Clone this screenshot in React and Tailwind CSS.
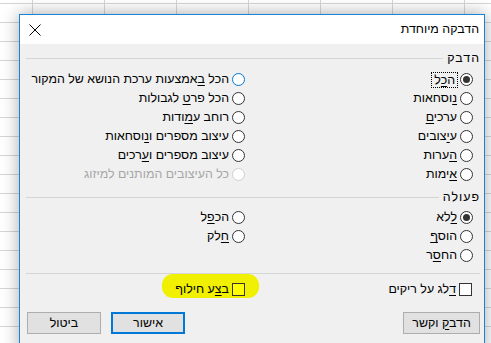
import React from "react";

function U({ children }) {
  return <span className="underline underline-offset-[2px]">{children}</span>;
}

function Radio({ children, checked, focus, blue, disabled }) {
  const ring = blue
    ? "border-[#0078d7]"
    : disabled
    ? "border-[#cfcfcf]"
    : "border-[#333333]";
  return (
    <div className="flex items-center h-[19px] gap-[2px]">
      <span
        className={`w-[13px] h-[13px] rounded-full border bg-white flex items-center justify-center shrink-0 ${ring}`}
      >
        {checked && <span className="w-[7px] h-[7px] rounded-full bg-[#333333]" />}
      </span>
      <span
        className={`${focus ? "border border-dotted border-black h-[16px] px-[2px] leading-[14px]" : "px-[1px]"} ${
          disabled ? "text-[#a6a6a6]" : "text-black"
        }`}
      >
        {children}
      </span>
    </div>
  );
}

function Check({ children, yellow }) {
  return (
    <div className="flex items-center h-[19px] gap-[3px]">
      <span
        className={`w-[13px] h-[13px] border border-[#333333] shrink-0 ${
          yellow ? "bg-[#ffff00]" : "bg-white"
        }`}
      />
      <span className="text-black">{children}</span>
    </div>
  );
}

function Header({ children }) {
  return (
    <div className="flex items-center h-[16px] gap-[4px]">
      <span className="tracking-[1px]">{children}</span>
      <div className="flex-1 h-px bg-[#d5d5d5]" />
    </div>
  );
}

function Btn({ children, primary, w }) {
  return (
    <div
      className={`h-[22px] flex items-center justify-center bg-[#e1e1e1] ${
        primary ? "border-2 border-[#0078d7]" : "border border-[#adadad]"
      } ${w}`}
    >
      <span>{children}</span>
    </div>
  );
}

export default function App() {
  return (
    <div className="relative w-[491px] h-[343px] overflow-hidden bg-white bg-[linear-gradient(to_right,#d6d6d6_1px,transparent_1px),linear-gradient(to_bottom,#d6d6d6_1px,transparent_1px)] bg-[size:72px_19px] bg-[position:32px_3px] [font-family:'Liberation_Sans','DejaVu_Sans',sans-serif] text-[12.4px] text-black">
      <div
        dir="rtl"
        className="absolute left-[19px] top-[14px] w-[466px] h-[340px] border border-[#1883d7] bg-[#f0f0f0] shadow-[0_0_16px_rgba(0,0,0,0.35)] flex flex-col"
      >
        {/* title bar */}
        <div className="h-[29px] bg-white flex items-center justify-between pr-[5px] pl-[9px] shrink-0">
          <span>הדבקה מיוחדת</span>
          <svg width="12" height="12" viewBox="0 0 12 12" className="block">
            <path d="M0.5 0.5 L11.5 11.5 M11.5 0.5 L0.5 11.5" stroke="#000" strokeWidth="1" fill="none" />
          </svg>
        </div>

        {/* body */}
        <div className="pl-[6px] pr-[4px] pt-[6px] flex flex-col">
          <Header>הדבק</Header>
          <div className="flex mt-[4px]">
            <div className="w-[235px] pr-[7px] flex flex-col">
              <Radio checked focus>
                ה<U>כ</U>ל
              </Radio>
              <Radio>
                <U>נ</U>וסחאות
              </Radio>
              <Radio>
                ערכי<U>ם</U>
              </Radio>
              <Radio>
                ע<U>י</U>צובים
              </Radio>
              <Radio>
                <U>ה</U>ערות
              </Radio>
              <Radio>
                <U>א</U>ימות
              </Radio>
            </div>
            <div className="flex flex-col">
              <Radio blue>
                הכל <U>ב</U>אמצעות ערכת הנושא של המקור
              </Radio>
              <Radio>
                הכל פר<U>ט</U> לגבולות
              </Radio>
              <Radio>
                רוחב ע<U>מ</U>ודות
              </Radio>
              <Radio>
                עיצוב מספרים ו<U>נ</U>וסחאות
              </Radio>
              <Radio>
                עיצוב מספרים ו<U>ע</U>רכים
              </Radio>
              <Radio disabled>כל העיצובים המותנים למיזוג</Radio>
            </div>
          </div>

          <div className="mt-[5px]">
            <Header>פעולה</Header>
          </div>
          <div className="flex mt-[3px]">
            <div className="w-[235px] pr-[7px] flex flex-col">
              <Radio checked>
                <U>ל</U>לא
              </Radio>
              <Radio>
                הוס<U>ף</U>
              </Radio>
              <Radio>
                הח<U>ס</U>ר
              </Radio>
            </div>
            <div className="flex flex-col">
              <Radio>
                הכ<U>פ</U>ל
              </Radio>
              <Radio>
                <U>ח</U>לק
              </Radio>
            </div>
          </div>

          <div className="mt-[8px] h-px bg-[#d5d5d5]" />

          <div className="flex mt-[6px]">
            <div className="w-[235px] pr-[8px] flex">
              <Check>
                <U>ד</U>לג על ריקים
              </Check>
            </div>
            <div className="relative flex">
              <span className="absolute right-[-14px] top-[-6px] w-[97px] h-[24px] rounded-[11px] bg-[#f0f000]" />
              <div className="relative">
                <Check yellow>
                  ב<U>צ</U>ע חילוף
                </Check>
              </div>
            </div>
          </div>

          <div className="flex justify-between mt-[13px]">
            <div className="-ml-[1px]">
              <Btn w="w-[77px]">
                הדב<U>ק</U> וקשר
              </Btn>
            </div>
            <div className="flex gap-[10px] ml-[1px]">
              <Btn primary w="w-[74px]">
                אישור
              </Btn>
              <Btn w="w-[74px]">ביטול</Btn>
            </div>
          </div>
        </div>
      </div>
    </div>
  );
}
